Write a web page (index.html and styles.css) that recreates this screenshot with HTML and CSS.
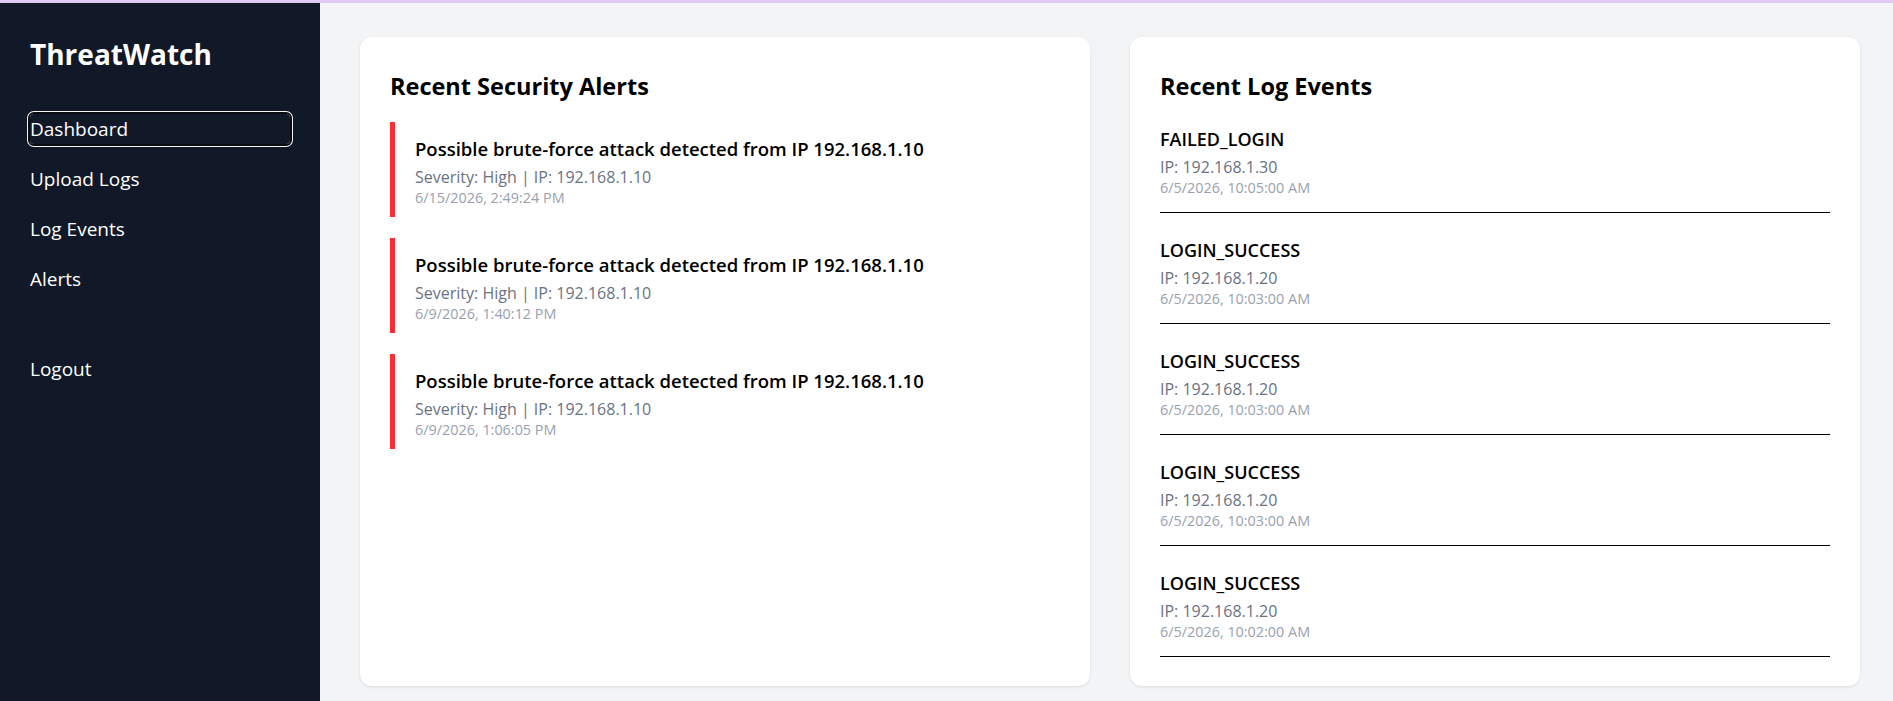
FILE: index.html
```html
<!DOCTYPE html>
<html lang="en">
<head>
    <meta charset="UTF-8">
    <meta name="viewport" content="width=device-width, initial-scale=1.0">
    <title>ThreatWatch - Dashboard</title>
    <link rel="stylesheet" href="styles.css">
</head>
<body>
    <div class="layout">
        <aside class="sidebar">
            <h1 class="brand">ThreatWatch</h1>
            <nav class="nav">
                <a href="#" class="nav-link active">Dashboard</a>
                <a href="#" class="nav-link">Upload Logs</a>
                <a href="#" class="nav-link">Log Events</a>
                <a href="#" class="nav-link">Alerts</a>
                <a href="#" class="nav-link logout">Logout</a>
            </nav>
        </aside>

        <main class="main">
            <div class="grid">
                <section class="card">
                    <h2>Recent Security Alerts</h2>
                    <div class="alert">
                        <h3>Possible brute-force attack detected from IP 192.168.1.10</h3>
                        <p class="meta">Severity: High | IP: 192.168.1.10</p>
                        <p class="time">6/15/2026, 2:49:24 PM</p>
                    </div>
                    <div class="alert">
                        <h3>Possible brute-force attack detected from IP 192.168.1.10</h3>
                        <p class="meta">Severity: High | IP: 192.168.1.10</p>
                        <p class="time">6/9/2026, 1:40:12 PM</p>
                    </div>
                    <div class="alert">
                        <h3>Possible brute-force attack detected from IP 192.168.1.10</h3>
                        <p class="meta">Severity: High | IP: 192.168.1.10</p>
                        <p class="time">6/9/2026, 1:06:05 PM</p>
                    </div>
                </section>

                <section class="card">
                    <h2>Recent Log Events</h2>
                    <div class="log-item">
                        <h3>FAILED_LOGIN</h3>
                        <p class="meta">IP: 192.168.1.30</p>
                        <p class="time">6/5/2026, 10:05:00 AM</p>
                    </div>
                    <div class="log-item">
                        <h3>LOGIN_SUCCESS</h3>
                        <p class="meta">IP: 192.168.1.20</p>
                        <p class="time">6/5/2026, 10:03:00 AM</p>
                    </div>
                    <div class="log-item">
                        <h3>LOGIN_SUCCESS</h3>
                        <p class="meta">IP: 192.168.1.20</p>
                        <p class="time">6/5/2026, 10:03:00 AM</p>
                    </div>
                    <div class="log-item">
                        <h3>LOGIN_SUCCESS</h3>
                        <p class="meta">IP: 192.168.1.20</p>
                        <p class="time">6/5/2026, 10:03:00 AM</p>
                    </div>
                    <div class="log-item">
                        <h3>LOGIN_SUCCESS</h3>
                        <p class="meta">IP: 192.168.1.20</p>
                        <p class="time">6/5/2026, 10:02:00 AM</p>
                    </div>
                </section>
            </div>
        </main>
    </div>
</body>
</html>
```

FILE: styles.css
```css
body {
    margin: 0;
    font-family: "Segoe UI", "Open Sans", "Noto Sans", sans-serif;
    color: #000;
    border-top: 3px solid #dfc8f3;
    background-color: #f3f4f6;
}
.layout {
    display: flex;
    min-height: 698px;
}
.sidebar {
    width: 320px;
    flex-shrink: 0;
    box-sizing: border-box;
    padding: 33px 30px;
    background-color: #111827;
    color: #fff;
}
.brand {
    margin: 0 0 41px;
    font-size: 28px;
    line-height: 37px;
    font-weight: 700;
}
.nav-link {
    display: block;
    padding: 3px 0;
    margin-bottom: 20px;
    font-size: 19px;
    line-height: 24px;
    color: #fff;
    text-decoration: none;
    border-radius: 4px;
}
.nav-link.active {
    box-shadow: 0 0 0 2px #0b0d12, 0 0 0 3px #f5f5f5;
}
.nav-link.logout {
    margin-top: 60px;
}
.main {
    flex: 1;
    padding: 34px 33px 14px 40px;
}
.grid {
    display: grid;
    grid-template-columns: 1fr 1fr;
    gap: 40px;
}
.card {
    background-color: #fff;
    border-radius: 12px;
    padding: 33px 30px 29px;
    box-shadow: 0 1px 3px rgba(0, 0, 0, 0.1);
}
.card h2 {
    margin: 0 0 20px;
    font-size: 23.5px;
    line-height: 32px;
    font-weight: 700;
}
.card h3 {
    margin: 0 0 5px;
    font-size: 18px;
    line-height: 24px;
    font-weight: 600;
}
.card p {
    margin: 0;
}
.meta {
    font-size: 16px;
    line-height: 22px;
    color: #6a7282;
}
.time {
    font-size: 14.4px;
    line-height: 20px;
    color: #99a1af;
}
.alert {
    border-left: 5px solid #fb2c36;
    padding: 15px 20px 9px;
    margin-bottom: 21px;
}
.alert h3 {
    font-size: 18.5px;
}
.log-item {
    padding: 5px 0 14px;
    border-bottom: 1px solid #000;
    margin-bottom: 20px;
}
.log-item:last-child {
    margin-bottom: 0;
}
```
